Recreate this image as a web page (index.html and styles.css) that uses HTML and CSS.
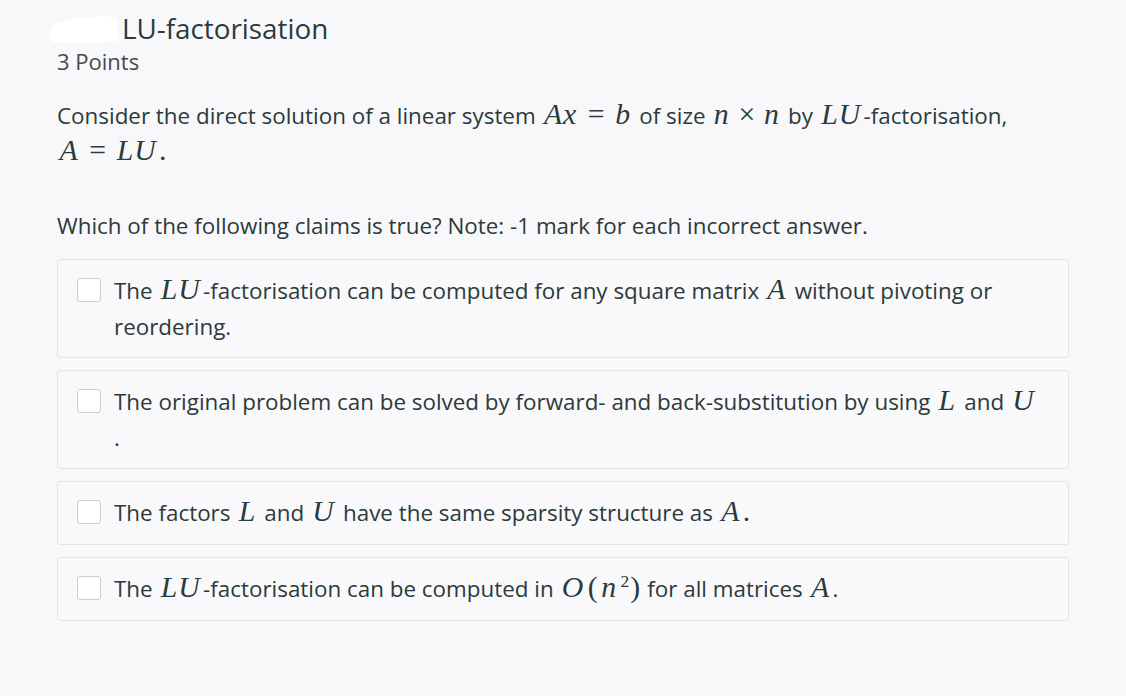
FILE: index.html
```html
<!DOCTYPE html>
<html>
<head>
<meta charset="utf-8">
<link rel="stylesheet" href="styles.css">
</head>
<body>
<div class="question">
  <div class="title-row">
    <svg class="redact" width="70" height="34" viewBox="0 0 70 34"><path d="M4 14 C10 8 18 12 26 7 C34 4 40 9 48 5 C56 3 62 8 68 6 L69 30 C55 32 30 33 2 31 C0 25 1 18 4 14 Z" fill="#fff"/></svg>
    <h1 class="title">LU-factorisation</h1>
  </div>
  <div class="points">3 Points</div>

  <p class="prompt">Consider the direct solution of a linear system <span class="m">Ax</span><span class="mo rel">=</span><span class="m">b</span> of size <span class="m">n</span><span class="mo bin">×</span><span class="m">n</span> by <span class="m">LU</span>-factorisation,<br><span class="m">A</span><span class="mo rel">=</span><span class="m">LU</span><span class="mo">.</span></p>

  <p class="prompt">Which of the following claims is true? Note: -1 mark for each incorrect answer.</p>

  <div class="options">
    <label class="option"><span class="box"></span><span class="otext">The <span class="m">LU</span>-factorisation can be computed for any square matrix <span class="m">A</span> without pivoting or<br>reordering.</span></label>
    <label class="option"><span class="box"></span><span class="otext">The original problem can be solved by forward- and back-substitution by using <span class="m">L</span> and <span class="m">U</span><br>.</span></label>
    <label class="option single"><span class="box"></span><span class="otext">The factors <span class="m">L</span> and <span class="m">U</span> have the same sparsity structure as <span class="m">A</span><span class="mo">.</span></span></label>
    <label class="option single"><span class="box"></span><span class="otext">The <span class="m">LU</span>-factorisation can be computed in <span class="m">O</span><span class="mo paren">(</span><span class="m">n</span><sup class="sup">2</sup><span class="mo paren">)</span> for all matrices <span class="m">A</span>.</span></label>
  </div>
</div>
</body>
</html>
```

FILE: styles.css
```css
html, body {
  margin: 0;
  padding: 0;
  background: #f8f8fa;
}
body {
  font-family: "Open Sans", "Lato", sans-serif;
  color: #2c3a3a;
}
.question {
  padding: 8px 57px 0 57px;
  width: 1012px;
}
.title-row {
  display: flex;
  align-items: center;
  height: 40px;
  margin-left: -8px;
}
.redact {
  display: block;
  margin-right: 3px;
}
.title {
  margin: 0;
  font-size: 27.8px;
  font-weight: 400;
  line-height: 40px;
}
.points {
  font-size: 22px;
  line-height: 26px;
  color: #424c4c;
}
.prompt {
  font-size: 22.4px;
  line-height: 36px;
  margin: 24px 0 0 0;
}
.prompt + .prompt {
  margin-top: 38px;
}
.m {
  font-family: "Liberation Serif", "DejaVu Serif", serif;
  font-style: italic;
  font-size: 1.33em;
  line-height: 1;
  margin: 0 0.08em;
  letter-spacing: 0.03em;
}
.mo {
  font-family: "Liberation Serif", "DejaVu Serif", serif;
  font-size: 1.33em;
  line-height: 1;
}
.rel {
  margin: 0 0.28em;
}
.bin {
  margin: 0 0.22em;
}
.paren {
  margin: 0 0.04em;
}
.sup {
  font-family: "Liberation Serif", serif;
  font-size: 0.78em;
  line-height: 0;
  vertical-align: 0.55em;
  margin-left: 1px;
}
.options {
  display: flex;
  flex-direction: column;
  gap: 12px;
  margin-top: 15px;
}
.option {
  display: flex;
  align-items: flex-start;
  background: #f9f9fb;
  border: 1px solid #e2e4e8;
  border-radius: 3px;
  padding: 13px 20px 12px 19px;
  font-size: 22.4px;
  line-height: 36px;
}
.option.single {
  padding-bottom: 13px;
}
.box {
  flex: none;
  width: 22px;
  height: 22px;
  border: 1px solid #c9ced4;
  border-radius: 3px;
  background: #ffffff;
  margin-top: 5px;
  margin-right: 13px;
}
.otext {
  display: block;
}
```
